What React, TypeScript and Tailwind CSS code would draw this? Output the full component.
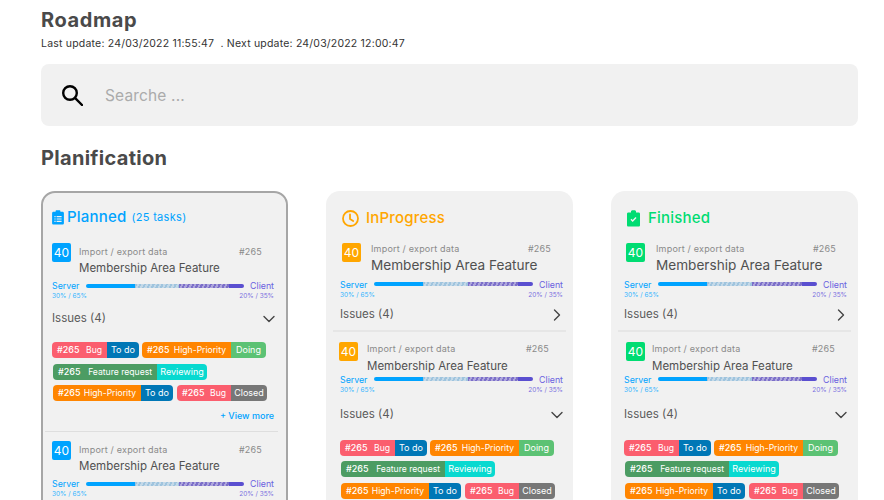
const stripeBlue = "bg-[repeating-linear-gradient(115deg,#9fc4de_0,#9fc4de_2px,#c4d9e8_2px,#c4d9e8_4px)]";
const stripePurple = "bg-[repeating-linear-gradient(115deg,#7c6fc9_0,#7c6fc9_2px,#ada6dc_2px,#ada6dc_4px)]";

function Tag({ kind, kindColor, status, statusColor, w, sw }: { kind: string; kindColor: string; status: string; statusColor: string; w: string; sw: string }) {
  return (
    <div className="flex h-4 rounded-[4px] overflow-hidden text-white text-[9px] leading-4 whitespace-nowrap">
      <div className={`${kindColor} ${w} px-[5px] flex justify-between`}>
        <span className="font-medium">#265</span>
        <span className="text-[8.6px]">{kind}</span>
      </div>
      <div className={`${statusColor} ${sw} text-center`}>{status}</div>
    </div>
  );
}

const red = "bg-[#fb5e6e]";
const orange = "bg-[#ff8500]";
const blue = "bg-[#0077b6]";
const green = "bg-[#5cc274]";
const dgreen = "bg-[#4c9c63]";
const teal = "bg-[#08d9d0]";
const gray = "bg-[#777777]";

function Tags() {
  return (
    <div className="flex flex-col gap-[5.5px]">
      <div className="flex gap-[3px]">
        <Tag kind="Bug" kindColor={red} status="To do" statusColor={blue} w="w-[55px]" sw="w-[32px]" />
        <Tag kind="High-Priority" kindColor={orange} status="Doing" statusColor={green} w="w-[89px]" sw="w-[35px]" />
      </div>
      <div className="flex ml-px">
        <Tag kind="Feature request" kindColor={dgreen} status="Reviewing" statusColor={teal} w="w-[104px]" sw="w-[50px]" />
      </div>
      <div className="flex gap-[4px] ml-px">
        <Tag kind="High-Priority" kindColor={orange} status="To do" statusColor={blue} w="w-[88px]" sw="w-[32px]" />
        <Tag kind="Bug" kindColor={red} status="Closed" statusColor={gray} w="w-[54px]" sw="w-[36px]" />
      </div>
    </div>
  );
}

function ChevDown({ cls }: { cls: string }) {
  return (
    <svg viewBox="0 0 20 20" className={`w-5 h-5 shrink-0 ${cls}`} fill="none" stroke="#444444" strokeWidth="1.4" strokeLinecap="round" strokeLinejoin="round">
      <path d="M5 7.500l5 5 5-5" />
    </svg>
  );
}

function ChevRight({ cls }: { cls: string }) {
  return (
    <svg viewBox="0 0 20 20" className={`w-5 h-5 shrink-0 ${cls}`} fill="none" stroke="#444444" strokeWidth="1.4" strokeLinecap="round" strokeLinejoin="round">
      <path d="M7.500 5l5 5-5 5" />
    </svg>
  );
}

type ItemProps = {
  color: string;
  big?: boolean;
  left: string;
  gap: string;
  hashMr: string;
  labelMt: string;
  nameMt: string;
  barMt: string;
  issuesMt?: string;
  tagsMt?: string;
  chevron?: "down" | "right";
  chevMr?: string;
  withTags?: boolean;
  more?: boolean;
};

function Item({ color, big, left, gap, hashMr, labelMt, nameMt, barMt, issuesMt, tagsMt, chevron, chevMr, withTags, more }: ItemProps) {
  return (
    <div>
      <div className={`flex ${left}`}>
        <div className={`${color} w-[19px] h-[19px] rounded-[2px] text-white text-[12px] leading-[19px] text-center shrink-0`}>40</div>
        <div className={`flex-1 ${gap} ${hashMr} ${labelMt}`}>
          <div className="flex justify-between text-[9px] leading-[14px] text-[#8a8a8a] tracking-[0.2px]">
            <span>Import / export data</span>
            <span>#265</span>
          </div>
          <div className={`${big ? "text-[13.6px]" : "text-[11.5px]"} ${nameMt} leading-[18px] text-[#505050] whitespace-nowrap`}>Membership Area Feature</div>
        </div>
      </div>
      <div className={barMt}>
        <div className="flex items-center text-[8.8px] leading-[11px]">
          <span className="text-[#00a3ff] w-[34px]">Server</span>
          <div className="flex-1 flex h-1 rounded-full overflow-hidden">
            <div className="bg-[#00a3ff] w-[31%]" />
            <div className={`${stripeBlue} w-[28%]`} />
            <div className={`${stripePurple} w-[31.5%]`} />
            <div className="bg-[#5a4fd0] flex-1" />
          </div>
          <span className="text-[#6a5fe0] w-[30px] text-right">Client</span>
        </div>
        <div className="flex justify-between text-[6.5px] leading-[8px] mt-[1px]">
          <span className="text-[#33b5ff]">30% / 65%</span>
          <span className="text-[#7a70e0]">20% / 35%</span>
        </div>
      </div>
      {chevron && (
        <div className={`flex items-center justify-between ${issuesMt} h-[14px] text-[11.5px] text-[#5a5a5a]`}>
          <span>Issues (4)</span>
          {chevron === "down" ? <ChevDown cls={chevMr ?? ""} /> : <ChevRight cls={chevMr ?? ""} />}
        </div>
      )}
      {withTags && <div className={tagsMt}><Tags /></div>}
      {more && <div className="mt-[9px] text-right text-[9px] leading-[12px] text-[#00a3ff] font-medium">+ View more</div>}
    </div>
  );
}

function ClipList() {
  return (
    <svg viewBox="0 0 12 15" className="w-3 h-[15px] shrink-0" fill="#00a3ff">
      <path fillRule="evenodd" d="M1.5 1.8H3.6V1.2C3.6.6 4 .2 4.6.2h2.8c.6 0 1 .4 1 1v.6h2.1c.8 0 1.400.6 1.400 1.400v10c0 .8-.6 1.400-1.400 1.400h-9C.7 14.600.1 14 .1 13.200v-10c0-.8.6-1.400 1.400-1.400zM2.400 6v1.200h1.200V6zm2.200 0v1.200h5V6zM2.400 8.400v1.200h1.200V8.400zm2.200 0v1.200h5V8.400zM2.400 10.800V12h1.200v-1.200zm2.200 0V12h5v-1.200z" />
    </svg>
  );
}

function ClipCheck() {
  return (
    <svg viewBox="0 0 13 17" className="w-[13px] h-[17px] shrink-0" fill="#00dc72">
      <path fillRule="evenodd" d="M1.300 2.500H4V1.600C4 .8 4.700.2 5.500.2h2c.8 0 1.500.6 1.500 1.400v.9h2.700c.7 0 1.300.6 1.300 1.300v11.400c0 .7-.6 1.300-1.300 1.300H1.300C.6 16.500 0 15.900 0 15.200V3.800c0-.7.6-1.300 1.300-1.300zM3.500 9.700l2.200 2.200 3.800-3.900-1-1-2.800 2.900-1.200-1.200z" />
    </svg>
  );
}

function ClockIcon() {
  return (
    <svg viewBox="0 0 17 17" className="w-[17px] h-[17px] shrink-0" fill="none" stroke="#ffa600" strokeWidth="1.8" strokeLinecap="round" strokeLinejoin="round">
      <circle cx="8.500" cy="8.500" r="7.500" />
      <path d="M8 4.500v4.500l3.200 2" />
    </svg>
  );
}

function SearchIcon() {
  return (
    <svg viewBox="0 0 21 21" className="w-[21px] h-[21px] shrink-0" fill="none" stroke="#000000" strokeWidth="2.400" strokeLinecap="round">
      <circle cx="8" cy="8" r="6.800" />
      <path d="M13.200 13.200L20 20" />
    </svg>
  );
}

export default function App() {
  return (
    <div className="h-[500px] w-[884px] overflow-hidden bg-white pl-[41px] pr-[26px] font-['Inter','Noto_Sans',sans-serif] flex flex-col">
      <h1 className="text-[20px] leading-6 font-bold text-[#4a4a4a] mt-[8px] tracking-[0.6px]">Roadmap</h1>
      <p className="text-[10.5px] leading-[14px] text-[#333333] mt-[5px] tracking-[0.2px] whitespace-pre">Last update: 24/03/2022 11:55:47  . Next update: 24/03/2022 12:00:47</p>
      <div className="mt-[13px] h-[62px] shrink-0 bg-[#f1f1f1] rounded-lg flex items-center pl-[21px]">
        <SearchIcon />
        <span className="ml-[22px] mt-[2px] text-[15.5px] text-[#ababab] tracking-[0.15px]">Searche ...</span>
      </div>
      <h2 className="text-[20px] leading-6 font-bold text-[#4a4a4a] mt-[20px] tracking-[0.3px]">Planification</h2>

      <div className="mt-[21px] flex gap-[38px] items-start">
        {/* Planned */}
        <div className="w-[247px] h-[400px] shrink-0 bg-[#f1f1f1] rounded-[14px] border-2 border-[#a6a6a6] pt-[13px] pl-[9px] pr-[12px]">
          <div className="flex items-center h-[22px]">
            <ClipList />
            <span className="ml-[3px] text-[15px] font-medium text-[#00a3ff] tracking-[0.2px]">Planned</span>
            <span className="ml-[5px] text-[11px] text-[#00a3ff] tracking-[0.3px]">(25 tasks)</span>
          </div>
          <div className="mt-[15px]">
            <Item color="bg-[#00a3ff]" left="" gap="ml-2" hashMr="mr-[12px]" labelMt="mt-[2px]" nameMt="mt-0" barMt="mt-[3px]" issuesMt="mt-[12px]" tagsMt="mt-[16px]" chevron="down" chevMr="-mr-[5px]" withTags more />
          </div>
          <div className="mt-[9px] -ml-[7px] -mr-1 h-px bg-[#dedede]" />
          <div className="mt-[9px]">
            <Item color="bg-[#00a3ff]" left="" gap="ml-2" hashMr="mr-[12px]" labelMt="mt-[2px]" nameMt="mt-0" barMt="mt-[3px]" />
          </div>
        </div>

        {/* InProgress */}
        <div className="w-[247px] h-[400px] shrink-0 bg-[#f1f1f1] rounded-[14px] pt-[16px] pl-[14px] pr-[10px]">
          <div className="flex items-center h-[22px] pl-[2px]">
            <ClockIcon />
            <span className="ml-[7px] text-[15px] font-medium text-[#ffa600] tracking-[0.2px]">InProgress</span>
          </div>
          <div className="mt-[14px]">
            <Item color="bg-[#ffa600]" big left="pl-[2px]" gap="ml-[10px]" hashMr="mr-[12px]" labelMt="-mt-px" nameMt="mt-0" barMt="mt-[4.5px]" issuesMt="mt-[9px]" chevron="right" chevMr="-mr-1" />
          </div>
          <div className="mt-2 -ml-[7px] -mr-[3px] h-[2px] bg-[#e6e6e6]" />
          <div className="mt-[10px]">
            <Item color="bg-[#ffa600]" left="-ml-px" gap="ml-[9px]" hashMr="mr-[14px]" labelMt="mt-0" nameMt="mt-px" barMt="-mt-px" issuesMt="mt-[14px]" tagsMt="mt-[18px]" chevron="down" chevMr="-mr-1" withTags />
          </div>
        </div>

        {/* Finished */}
        <div className="w-[247px] h-[400px] shrink-0 bg-[#f1f1f1] rounded-[14px] pt-[16px] pl-[13px] pr-[11px]">
          <div className="flex items-center h-[22px] pl-[3px]">
            <ClipCheck />
            <span className="ml-[8px] text-[15px] font-medium text-[#00dc72] tracking-[0.2px]">Finished</span>
          </div>
          <div className="mt-[14px]">
            <Item color="bg-[#00dc72]" big left="pl-[2px]" gap="ml-[11px]" hashMr="mr-[11px]" labelMt="-mt-px" nameMt="mt-0" barMt="mt-[4.5px]" issuesMt="mt-[9px]" chevron="right" chevMr="-mr-1" />
          </div>
          <div className="mt-2 -ml-[6px] -mr-1 h-[2px] bg-[#e6e6e6]" />
          <div className="mt-[10px]">
            <Item color="bg-[#00dc72]" left="pl-[2px]" gap="ml-[7px]" hashMr="mr-[12px]" labelMt="mt-0" nameMt="mt-px" barMt="-mt-px" issuesMt="mt-[14px]" tagsMt="mt-[18px]" chevron="down" chevMr="-mr-1" withTags />
          </div>
        </div>
      </div>
    </div>
  );
}
